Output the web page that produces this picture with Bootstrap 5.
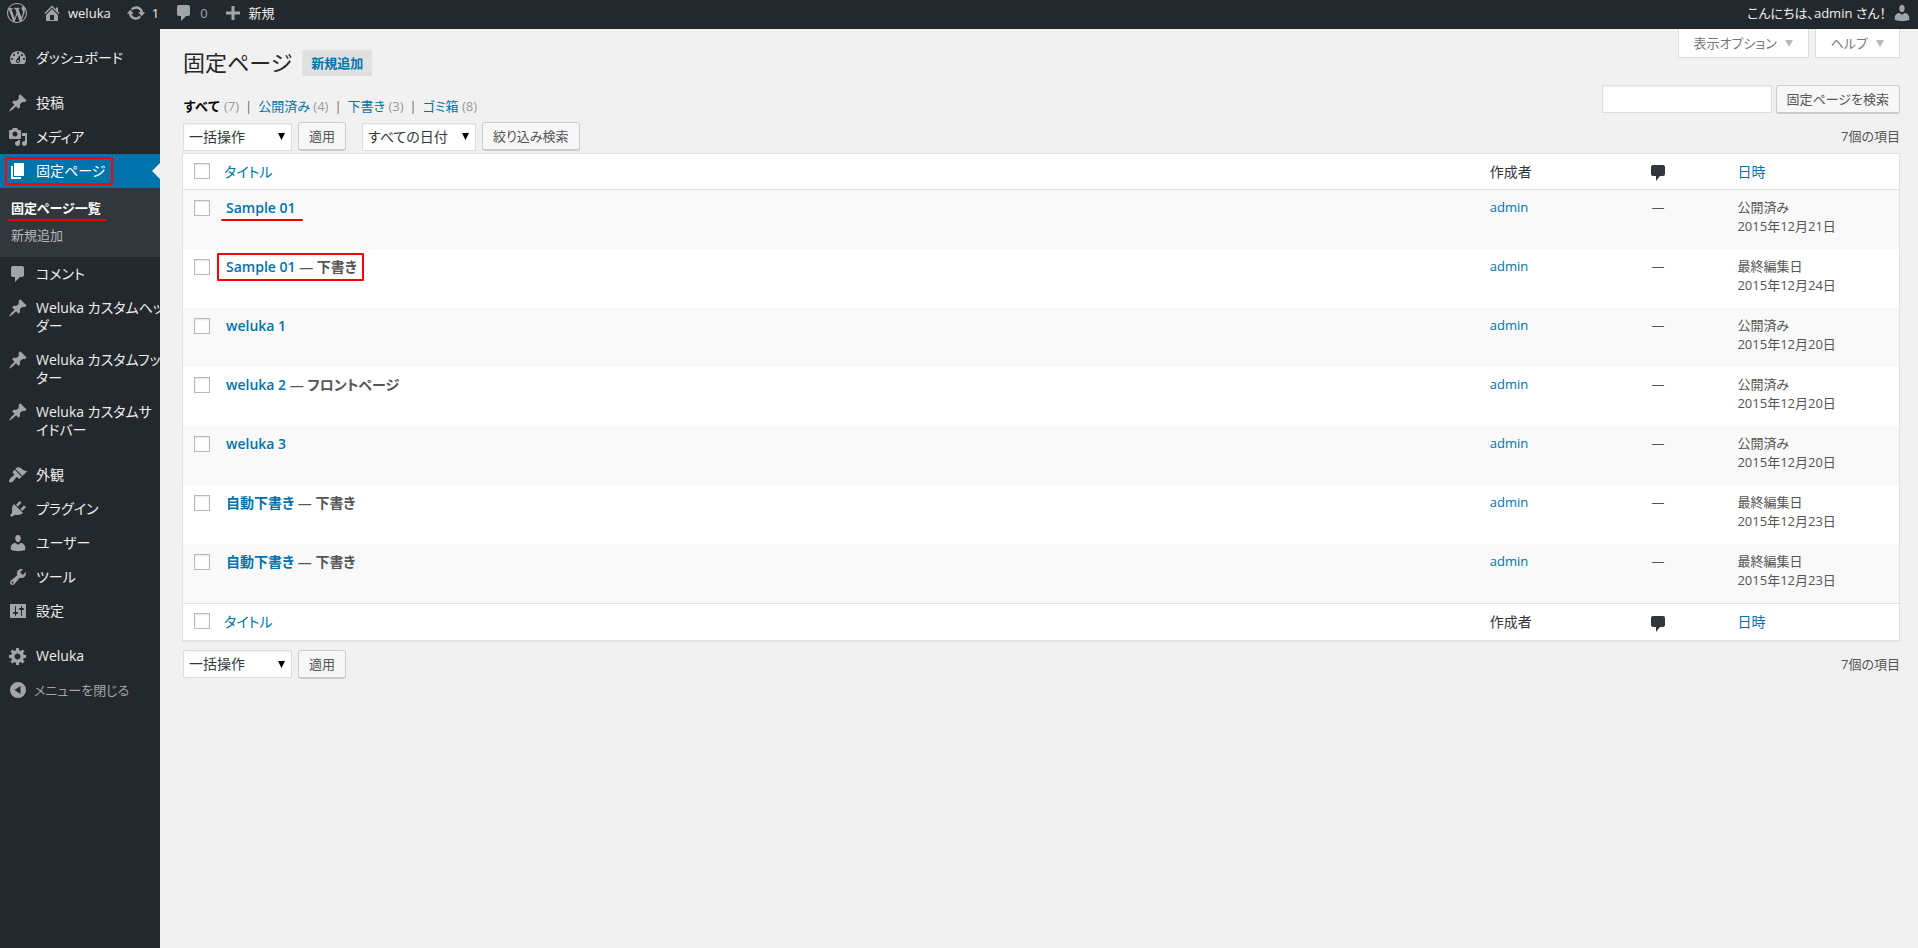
<!DOCTYPE html>
<html lang="ja">
<head>
<meta charset="utf-8">
<meta name="viewport" content="width=device-width, initial-scale=1">
<title>固定ページ ‹ weluka — WordPress</title>
<link rel="stylesheet" href="https://cdn.jsdelivr.net/npm/bootstrap@5.3.0/dist/css/bootstrap.min.css">
<style>
:root { --wp-dark:#23282d; --wp-sub:#32373c; --wp-blue:#0073aa; --wp-icon:#a0a5aa; --wp-line:#e1e1e1; }
body { font-family:"Open Sans","Noto Sans CJK JP",sans-serif; font-size:13px; line-height:19px; color:#555; background:#f1f1f1; font-feature-settings:"palt"; }
button, input, select { font-feature-settings:inherit; }
a { color:var(--wp-blue); text-decoration:none; }
.ico { width:20px; height:20px; fill:currentColor; flex:none; }

/* admin bar */
.adminbar { background:var(--wp-dark); height:29px; padding:0 6px 4px 7px; line-height:24px; }
.adminbar nav { gap:15px; }
.adminbar a { color:#eee; display:flex; align-items:center; gap:6px; }
.adminbar .ico { color:var(--wp-icon); }
.adminbar .dim { color:var(--wp-icon); }

/* side menu */
.sidemenu { width:160px; flex:none; background:var(--wp-dark); padding-top:12px; }
.sidemenu a { color:#eee; }
.menu-item { display:flex; font-size:14px; line-height:18px; padding:8px 0; white-space:nowrap; position:relative; }
.menu-item .ico { margin:-1px 8px; color:var(--wp-icon); }
.menu-gap { margin-bottom:11px; }
.menu-item.current { background:var(--wp-blue); color:#fff; }
.menu-item.current .ico { color:#fff; }
.menu-item.current::after { content:""; position:absolute; right:0; top:9px; border:8px solid transparent; border-left:0; border-right-color:#f1f1f1; }
.submenu { background:var(--wp-sub); padding:7px 0 8px; }
.submenu a { display:block; padding:5px 11px; line-height:17px; color:#b4b9be; }
.submenu a.current { color:#fff; font-weight:600; }
.sidemenu .collapse-btn { background:none; border:0; color:var(--wp-icon); width:100%; text-align:left; font-size:13px; }
.sidemenu .collapse-btn .ico { margin-right:6px; }

/* red markers */
.marked { position:relative; }
.marked::before { content:""; position:absolute; pointer-events:none; }
.mark-box::before { border:2px solid red; border-radius:1px; }
.mark-line::before { height:2px; background:#f00000; border-radius:1px; }
.menu-item.mark-box::before { left:5px; top:3px; width:108px; height:28px; }
.submenu .mark-line::before { left:8px; width:99px; bottom:1px; }
.row-title.mark-line::before { left:-5px; right:-7px; bottom:-4px; }
.row-title.mark-box::before { left:-9px; right:-7px; top:-4px; bottom:-5px; }

/* screen tabs */
.content-area { padding:0 18px 0 23px; min-width:0; }
.screen-tabs { gap:6px; }
.screen-tab { background:#fff; border:1px solid #ddd; border-top:0; height:29px; padding:0 15px; color:#777; box-shadow:0 1px 1px -1px rgba(0,0,0,.1); display:flex; align-items:center; gap:8px; }
.screen-tab::after { content:""; border:4px solid transparent; border-top:7px solid #b4b9be; border-bottom:0; }
.headline { margin-top:-10px; }
h1 { font-size:22px; line-height:29px; font-weight:400; color:#23282d; margin:0; }
.add-new { background:#e0e0e0; border-radius:2px; font-weight:600; line-height:18px; padding:4px 9px; margin-left:10px; }

.list-head { margin-bottom:6px; }
.filters { color:#666; gap:6px; padding-top:20px; }
.filters .count { color:#999; }
.filters a.current { color:#000; font-weight:600; font-feature-settings:normal; }

.wp-field { height:28px; border:1px solid #ddd; border-radius:0; background-color:#fff; box-shadow:inset 0 1px 2px rgba(0,0,0,.07); color:#32373c; }
select.wp-field { font-size:14px; padding:0 24px 0 5px; line-height:26px; background-image:url("data:image/svg+xml,%3Csvg xmlns='http://www.w3.org/2000/svg' viewBox='0 0 7 7'%3E%3Cpath d='M0 0h7L3.5 7z'/%3E%3C/svg%3E"); background-size:7px 7px; background-position:right 6px center; }
.w-bulk { width:109px; }
.w-date { width:114px; }
.w-find { width:170px; }
.wp-btn { height:29px; border:1px solid #ccc; border-bottom-width:2px; border-radius:3px; background:#f7f7f7; color:#555; font-size:13px; line-height:24px; padding:0 10px; white-space:nowrap; }
.toolbar { margin-bottom:2px; }
.toolbar .wp-btn { margin-left:6px; }

/* page list */
.pages { background:#fff; border:1px solid var(--wp-line); box-shadow:0 1px 1px rgba(0,0,0,.04); border-collapse:separate; border-spacing:0; width:calc(100% + 1px); table-layout:fixed; margin:0 0 9px -1px; }
.pages th, .pages td { padding:8px 10px; vertical-align:top; font-weight:400; }
.pages thead th, .pages tfoot th { font-size:14px; line-height:19px; height:36px; color:#32373c; }
.pages thead th { border-bottom:1px solid var(--wp-line); }
.pages tfoot th { border-top:1px solid var(--wp-line); }
.pages tbody td { height:59px; }
.pages tbody tr:nth-child(odd) { background:#f9f9f9; }
.pages .c-check { width:33px; padding:10px 0 0 11px; line-height:0; }
.pages thead .c-check, .pages tfoot .c-check { padding-top:9px; }
.pages .c-title { font-size:14px; }
.pages thead .c-title, .pages tfoot .c-title { padding-left:8px; }
.c-author, .c-date { width:10%; }
.pages .c-talk { width:76px; padding-left:0; padding-right:0; }
.c-check input { appearance:none; width:16px; height:16px; border:1px solid #b4b9be; background:#fff; box-shadow:inset 0 1px 2px rgba(0,0,0,.1); margin:0; }
.c-check input:checked { background:var(--wp-blue); }
.row-title { font-weight:600; color:#555; display:inline-block; }
@media (max-width:800px) { .sidemenu { display:none; } .pages { table-layout:auto; } }
</style>
</head>
<body class="d-flex flex-column min-vh-100">
<svg class="d-none" xmlns="http://www.w3.org/2000/svg">
<symbol id="i-wp" viewBox="0 0 20 20"><path d="M20 10c0-5.51-4.49-10-10-10C4.48 0 0 4.49 0 10c0 5.52 4.48 10 10 10 5.51 0 10-4.48 10-10zM7.78 15.37L4.37 6.22c.55-.02 1.17-.08 1.17-.08.5-.06.44-1.13-.06-1.11 0 0-1.45.11-2.37.11-.18 0-.37 0-.58-.01C4.12 2.69 6.87 1.11 10 1.11c2.33 0 4.45.87 6.05 2.34-.68-.11-1.65.39-1.65 1.58 0 .74.45 1.36.9 2.1.35.61.55 1.36.55 2.46 0 1.49-1.4 5-1.4 5l-3.03-8.37c.54-.02.82-.17.82-.17.5-.05.44-1.25-.06-1.22 0 0-1.44.12-2.38.12-.87 0-2.33-.12-2.33-.12-.5-.03-.56 1.2-.06 1.22l.92.08 1.26 3.41zM17.41 10c.24-.64.74-1.87.43-4.25.7 1.29 1.05 2.71 1.05 4.25 0 3.29-1.73 6.24-4.4 7.78.97-2.59 1.94-5.2 2.92-7.78zM6.1 18.09C3.12 16.65 1.11 13.53 1.11 10c0-1.3.23-2.48.72-3.59C3.25 10.3 4.67 14.2 6.1 18.09zm4.03-6.63l2.58 6.98c-.86.29-1.76.45-2.71.45-.79 0-1.57-.11-2.29-.33.81-2.38 1.62-4.74 2.42-7.1z"/></symbol>
<symbol id="i-home" viewBox="0 0 20 20"><path d="M16 8.5l1.53 1.53-1.06 1.06L10 4.6l-6.47 6.49-1.06-1.06L10 2.5l4 4v-2h2v4zm-6-2.46l6 5.99V18H4v-5.97zM12 17v-5H8v5h4z"/></symbol>
<symbol id="i-update" viewBox="0 0 20 20"><path d="M10.2 3.28c3.53 0 6.43 2.61 6.92 6h2.08l-3.5 4-3.5-4h2.32c-.45-1.97-2.21-3.45-4.32-3.45-1.45 0-2.73.71-3.54 1.78L4.95 5.66C6.23 4.2 8.11 3.28 10.2 3.28zm-.4 13.44c-3.52 0-6.43-2.61-6.92-6H.8l3.5-4c1.17 1.33 2.33 2.67 3.5 4H5.48c.45 1.97 2.21 3.45 4.32 3.45 1.45 0 2.73-.71 3.54-1.78l1.71 1.95c-1.28 1.46-3.15 2.38-5.25 2.38z"/></symbol>
<symbol id="i-comment" viewBox="0 0 20 20"><path d="M5 2h9c1.1 0 2 .9 2 2v7c0 1.1-.9 2-2 2h-2l-5 5v-5H5c-1.1 0-2-.9-2-2V4c0-1.1.9-2 2-2z"/></symbol>
<symbol id="i-plus" viewBox="0 0 20 20"><path d="M17 8.500v3h-5.500V17h-3v-5.500H3v-3h5.500V3h3v5.500z"/></symbol>
<symbol id="i-dash" viewBox="0 0 20 20"><path d="M3.76 16h12.48c1.1-1.37 1.76-3.11 1.76-5 0-4.42-3.58-8-8-8s-8 3.58-8 8c0 1.89.66 3.63 1.76 5zM10 4c.55 0 1 .45 1 1s-.45 1-1 1-1-.45-1-1 .45-1 1-1zM6 6c.55 0 1 .45 1 1s-.45 1-1 1-1-.45-1-1 .45-1 1-1zm8 0c.55 0 1 .45 1 1s-.45 1-1 1-1-.45-1-1 .45-1 1-1zm-5.37 5.55L12 7v6c0 1.1-.9 2-2 2s-2-.9-2-2c0-.57.24-1.08.63-1.45zM4 10c.55 0 1 .45 1 1s-.45 1-1 1-1-.45-1-1 .45-1 1-1zm12 0c.55 0 1 .45 1 1s-.45 1-1 1-1-.45-1-1 .45-1 1-1zm-5 3c0-.55-.45-1-1-1s-1 .45-1 1 .45 1 1 1 1-.45 1-1z"/></symbol>
<symbol id="i-pin" viewBox="0 0 20 20"><path d="M10.440 3.020l1.820-1.820 6.360 6.350-1.830 1.820c-1.050-.68-2.480-.57-3.410.36l-.75.75c-.92.93-1.040 2.350-.35 3.410l-1.830 1.820-2.410-2.410-2.800 2.790c-.42.42-3.380 2.710-3.800 2.290s1.860-3.390 2.280-3.810l2.790-2.790L4.100 9.360l1.830-1.820c1.050.69 2.480.57 3.400-.36l.75-.75c.93-.92 1.050-2.350.36-3.410z"/></symbol>
<symbol id="i-media" viewBox="0 0 20 20"><path d="M13 11V4c0-.55-.45-1-1-1h-1.67L9 1H5L3.670 3H2c-.55 0-1 .45-1 1v7c0 .55.45 1 1 1h10c.55 0 1-.45 1-1zM7 4.500c1.380 0 2.500 1.120 2.500 2.500S8.380 9.500 7 9.500 4.500 8.380 4.500 7 5.620 4.500 7 4.500zM14 6h5v10.500c0 1.380-1.120 2.500-2.500 2.500S14 17.880 14 16.500s1.120-2.500 2.500-2.500c.17 0 .34.02.5.05V9h-3V6zm-4 8.050V13h2v3.500c0 1.380-1.120 2.500-2.500 2.500S7 17.880 7 16.500 8.120 14 9.500 14c.17 0 .34.02.5.05z"/></symbol>
<symbol id="i-page" viewBox="0 0 20 20"><path d="M6 15V2h10v13H6zm-1 1h8v2H3V5h2v11z"/></symbol>
<symbol id="i-brush" viewBox="0 0 20 20"><path d="M14.480 11.060L7.410 3.990l1.500-1.500c.5-.56 2.300-.47 3.510.32 1.210.8 1.430 1.280 2.910 2.100 1.180.64 2.450 1.260 4.450.85zm-.71.71L6.700 4.700 4.930 6.470c-.39.39-.39 1.020 0 1.410l1.060 1.060c.39.39.39 1.030 0 1.420-.6.6-1.430 1.110-2.210 1.690-.35.26-.7.53-1.010.84C1.430 14.230.4 16.080 1.400 17.070c.99 1 2.840-.03 4.180-1.360.31-.31.58-.66.85-1.020.57-.78 1.080-1.610 1.690-2.210.39-.39 1.020-.39 1.410 0l1.060 1.060c.39.39 1.020.39 1.410 0z"/></symbol>
<symbol id="i-plug" viewBox="0 0 20 20"><path d="M13.110 4.360L9.870 7.600 8 5.730l3.240-3.240c.35-.34 1.050-.2 1.560.32.52.51.66 1.210.31 1.550zm-8 1.770l.91-1.120 9.010 9.010-1.190.84c-.71.71-2.630 1.160-3.820 1.160H6.140L4.900 17.260c-.59.59-1.540.59-2.120 0-.59-.58-.59-1.530 0-2.120l1.240-1.240v-3.880c0-1.130.4-3.190 1.090-3.890zm7.260 3.970l3.240-3.240c.34-.35 1.040-.21 1.550.31.52.51.66 1.210.31 1.550l-3.240 3.250z"/></symbol>
<symbol id="i-user" viewBox="0 0 20 20"><path d="M10 9.250c-2.270 0-2.730-3.440-2.730-3.440C7 4.020 7.820 2 9.970 2c2.160 0 2.980 2.020 2.710 3.810 0 0-.41 3.440-2.680 3.440zm0 2.570L12.720 10c2.390 0 4.520 2.330 4.520 4.530v2.490s-3.650 1.130-7.240 1.130c-3.650 0-7.240-1.130-7.240-1.130v-2.490c0-2.250 1.940-4.480 4.470-4.480z"/></symbol>
<symbol id="i-tool" viewBox="0 0 20 20"><path d="M16.680 9.770c-1.340 1.340-3.300 1.670-4.950.99l-5.410 6.520c-.99.99-2.590.99-3.580 0s-.99-2.590 0-3.570l6.520-5.420c-.68-1.650-.35-3.610.99-4.950 1.280-1.280 3.120-1.620 4.720-1.060l-2.890 2.890 2.820 2.820 2.860-2.870c.53 1.580.18 3.390-1.080 4.650zM3.810 16.210c.4.39 1.040.39 1.430 0 .4-.4.4-1.040 0-1.430-.39-.4-1.030-.4-1.430 0-.39.39-.39 1.030 0 1.430z"/></symbol>
<symbol id="i-set" viewBox="0 0 20 20"><path d="M18 17V3H2v14h16zM8 11h1c.55 0 1 .45 1 1s-.45 1-1 1H8v1.500c0 .28-.22.5-.5.5s-.5-.22-.5-.5V13H6c-.55 0-1-.45-1-1s.45-1 1-1h1V5.500c0-.28.22-.5.5-.5s.5.22.5.5V11zm5-2h-1c-.55 0-1-.45-1-1s.45-1 1-1h1V5.500c0-.28.22-.5.5-.5s.5.22.5.5V7h1c.55 0 1 .45 1 1s-.45 1-1 1h-1v5.500c0 .28-.22.5-.5.5s-.5-.22-.5-.5V9z"/></symbol>
<symbol id="i-gear" viewBox="0 0 20 20"><path d="M18 12h-2.180c-.17.7-.44 1.350-.81 1.930l1.540 1.540-2.100 2.100-1.540-1.540c-.58.36-1.230.63-1.910.79V19H8v-2.180c-.68-.16-1.330-.43-1.910-.79l-1.540 1.540-2.120-2.120 1.540-1.540c-.36-.58-.63-1.230-.79-1.910H1V9.030h2.170c.16-.7.44-1.350.8-1.940L2.430 5.550l2.100-2.100 1.540 1.540c.58-.37 1.240-.64 1.930-.81V2h3v2.180c.68.16 1.330.43 1.910.79l1.540-1.540 2.120 2.120-1.540 1.540c.36.59.64 1.240.8 1.940H18V12zm-8.500 1.500c1.660 0 3-1.340 3-3s-1.340-3-3-3-3 1.340-3 3 1.340 3 3 3z"/></symbol>
<symbol id="i-fold" viewBox="0 0 20 20"><path fill-rule="evenodd" d="M10 2a8 8 0 1 0 0 16 8 8 0 0 0 0-16zm2.500 4v8L6.500 10z"/></symbol>
<symbol id="i-talk" viewBox="0 0 14 16"><path d="M2 0h10a2 2 0 0 1 2 2v7a2 2 0 0 1-2 2H9l-4 5v-5H2a2 2 0 0 1-2-2V2a2 2 0 0 1 2-2z"/></symbol>
</svg>

<header class="adminbar d-flex justify-content-between">
  <nav class="d-flex" aria-label="ツールバー">
    <a href="#" aria-label="WordPress について"><svg class="ico"><use href="#i-wp"/></svg></a>
    <a href="#"><svg class="ico"><use href="#i-home"/></svg>weluka</a>
    <a href="#"><svg class="ico"><use href="#i-update"/></svg>1</a>
    <a href="#" class="dim"><svg class="ico"><use href="#i-comment"/></svg>0</a>
    <a href="#"><svg class="ico"><use href="#i-plus"/></svg>新規</a>
  </nav>
  <a href="#">こんにちは、admin さん！<svg class="ico"><use href="#i-user"/></svg></a>
</header>

<div class="d-flex flex-grow-1">
  <nav class="sidemenu" aria-label="メインメニュー">
    <a href="#" class="menu-item menu-gap"><svg class="ico"><use href="#i-dash"/></svg>ダッシュボード</a>
    <a href="#" class="menu-item"><svg class="ico"><use href="#i-pin"/></svg>投稿</a>
    <a href="#" class="menu-item"><svg class="ico"><use href="#i-media"/></svg>メディア</a>
    <a href="#" class="menu-item current marked mark-box"><svg class="ico"><use href="#i-page"/></svg>固定ページ</a>
    <div class="submenu">
      <a href="#" class="current marked mark-line">固定ページ一覧</a>
      <a href="#">新規追加</a>
    </div>
    <a href="#" class="menu-item"><svg class="ico"><use href="#i-comment"/></svg>コメント</a>
    <a href="#" class="menu-item"><svg class="ico"><use href="#i-pin"/></svg><span>Weluka カスタムヘッ<br>ダー</span></a>
    <a href="#" class="menu-item"><svg class="ico"><use href="#i-pin"/></svg><span>Weluka カスタムフッ<br>ター</span></a>
    <a href="#" class="menu-item menu-gap"><svg class="ico"><use href="#i-pin"/></svg><span>Weluka カスタムサ<br>イドバー</span></a>
    <a href="#" class="menu-item"><svg class="ico"><use href="#i-brush"/></svg>外観</a>
    <a href="#" class="menu-item"><svg class="ico"><use href="#i-plug"/></svg>プラグイン</a>
    <a href="#" class="menu-item"><svg class="ico"><use href="#i-user"/></svg>ユーザー</a>
    <a href="#" class="menu-item"><svg class="ico"><use href="#i-tool"/></svg>ツール</a>
    <a href="#" class="menu-item menu-gap"><svg class="ico"><use href="#i-set"/></svg>設定</a>
    <a href="#" class="menu-item"><svg class="ico"><use href="#i-gear"/></svg>Weluka</a>
    <button type="button" class="menu-item collapse-btn"><svg class="ico"><use href="#i-fold"/></svg>メニューを閉じる</button>
  </nav>

  <main class="content-area flex-grow-1">
    <div class="screen-tabs d-flex justify-content-end">
      <button type="button" class="screen-tab">表示オプション</button>
      <button type="button" class="screen-tab">ヘルプ</button>
    </div>
    <div class="headline d-flex align-items-center">
      <h1>固定ページ</h1>
      <a href="#" class="add-new">新規追加</a>
    </div>

    <div class="list-head d-flex justify-content-between flex-wrap">
      <div class="filters d-flex">
        <span><a href="#" class="current">すべて</a> <span class="count">(7)</span></span>|
        <span><a href="#">公開済み</a> <span class="count">(4)</span></span>|
        <span><a href="#">下書き</a> <span class="count">(3)</span></span>|
        <span><a href="#">ゴミ箱</a> <span class="count">(8)</span></span>
      </div>
      <form class="d-flex gap-1 pt-2">
        <input type="search" id="find" class="wp-field w-find" aria-label="固定ページを検索">
        <button type="button" class="wp-btn">固定ページを検索</button>
      </form>
    </div>

    <div class="toolbar d-flex align-items-center">
      <select id="bulk1" class="form-select wp-field w-bulk" aria-label="一括操作を選択"><option>一括操作</option></select>
      <button type="button" class="wp-btn">適用</button>
      <select id="when" class="form-select wp-field w-date ms-3" aria-label="日付で絞り込む"><option>すべての日付</option></select>
      <button type="button" class="wp-btn">絞り込み検索</button>
      <span class="ms-auto">7個の項目</span>
    </div>

    <table class="pages">
      <thead><tr>
        <th class="c-check"><input type="checkbox" aria-label="すべて選択"></th>
        <th class="c-title"><a href="#">タイトル</a></th>
        <th class="c-author">作成者</th>
        <th class="c-talk"><svg width="14" height="16" fill="currentColor" role="img" aria-label="コメント"><use href="#i-talk"/></svg></th>
        <th class="c-date"><a href="#">日時</a></th>
      </tr></thead>
      <tbody>
        <tr><td class="c-check"><input type="checkbox" aria-label="Sample 01 を選択"></td><td class="c-title"><span class="row-title marked mark-line"><a href="#">Sample 01</a></span></td><td><a href="#">admin</a></td><td class="c-talk">—</td><td>公開済み<br>2015年12月21日</td></tr>
        <tr><td class="c-check"><input type="checkbox" aria-label="Sample 01 を選択"></td><td class="c-title"><span class="row-title marked mark-box"><a href="#">Sample 01</a> — 下書き</span></td><td><a href="#">admin</a></td><td class="c-talk">—</td><td>最終編集日<br>2015年12月24日</td></tr>
        <tr><td class="c-check"><input type="checkbox" aria-label="weluka 1 を選択"></td><td class="c-title"><span class="row-title"><a href="#">weluka 1</a></span></td><td><a href="#">admin</a></td><td class="c-talk">—</td><td>公開済み<br>2015年12月20日</td></tr>
        <tr><td class="c-check"><input type="checkbox" aria-label="weluka 2 を選択"></td><td class="c-title"><span class="row-title"><a href="#">weluka 2</a> — フロントページ</span></td><td><a href="#">admin</a></td><td class="c-talk">—</td><td>公開済み<br>2015年12月20日</td></tr>
        <tr><td class="c-check"><input type="checkbox" aria-label="weluka 3 を選択"></td><td class="c-title"><span class="row-title"><a href="#">weluka 3</a></span></td><td><a href="#">admin</a></td><td class="c-talk">—</td><td>公開済み<br>2015年12月20日</td></tr>
        <tr><td class="c-check"><input type="checkbox" aria-label="自動下書きを選択"></td><td class="c-title"><span class="row-title"><a href="#">自動下書き</a> — 下書き</span></td><td><a href="#">admin</a></td><td class="c-talk">—</td><td>最終編集日<br>2015年12月23日</td></tr>
        <tr><td class="c-check"><input type="checkbox" aria-label="自動下書きを選択"></td><td class="c-title"><span class="row-title"><a href="#">自動下書き</a> — 下書き</span></td><td><a href="#">admin</a></td><td class="c-talk">—</td><td>最終編集日<br>2015年12月23日</td></tr>
      </tbody>
      <tfoot><tr>
        <th class="c-check"><input type="checkbox" aria-label="すべて選択"></th>
        <th class="c-title"><a href="#">タイトル</a></th>
        <th class="c-author">作成者</th>
        <th class="c-talk"><svg width="14" height="16" fill="currentColor" role="img" aria-label="コメント"><use href="#i-talk"/></svg></th>
        <th class="c-date"><a href="#">日時</a></th>
      </tr></tfoot>
    </table>

    <div class="toolbar d-flex align-items-center">
      <select id="bulk2" class="form-select wp-field w-bulk" aria-label="一括操作を選択"><option>一括操作</option></select>
      <button type="button" class="wp-btn">適用</button>
      <span class="ms-auto">7個の項目</span>
    </div>
  </main>
</div>
<script src="https://cdn.jsdelivr.net/npm/bootstrap@5.3.0/dist/js/bootstrap.bundle.min.js"></script>
</body>
</html>
